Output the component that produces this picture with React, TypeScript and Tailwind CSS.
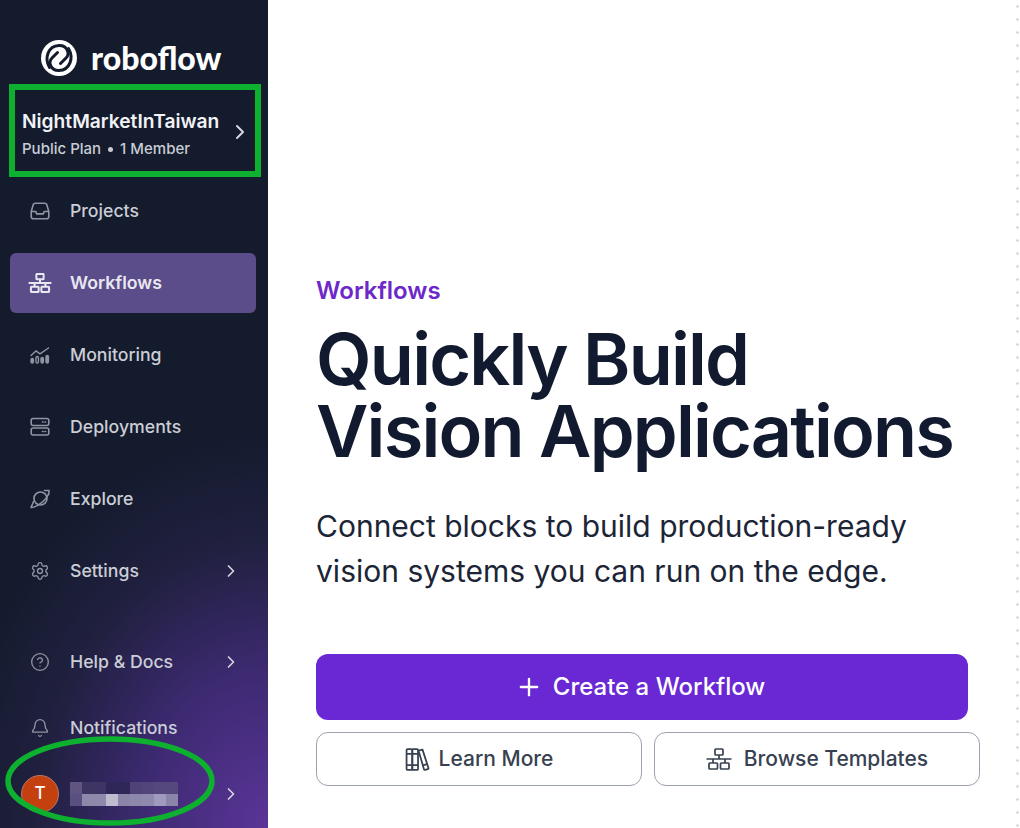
import { Plus, ChevronRight, Settings, Bell, CircleHelp } from "lucide-react";
import type { ReactNode } from "react";

const iconCls = "w-5 h-5 shrink-0 text-[#8f95a3]";

function InboxIcon() {
  return (
    <svg viewBox="0 0 20 20" fill="none" stroke="currentColor" strokeWidth="1.6" className={iconCls}>
      <path d="M1.2 10.500 3.200 3.800A2.200 2.200 0 0 1 5.300 2.200h9.400a2.200 2.200 0 0 1 2.100 1.600l2 6.700v5a2.300 2.300 0 0 1-2.300 2.300H3.500a2.300 2.300 0 0 1-2.300-2.300z" />
      <path d="M1.500 10.500h4.200l1 2.400h6.600l1-2.400h4.200" />
    </svg>
  );
}

function MonitorIcon() {
  return (
    <svg viewBox="0 0 20 20" fill="none" stroke="currentColor" strokeWidth="1.4" strokeLinecap="round" className={iconCls}>
      <path d="M1 10.500 6 6l4 2.800L18.500 3" />
      <rect x="1" y="13.500" width="2.400" height="4.500" rx="1.200" fill="currentColor" />
      <rect x="6" y="11.500" width="2.400" height="6.500" rx="1.200" />
      <rect x="11" y="12.500" width="2.400" height="5.500" rx="1.200" fill="currentColor" />
      <rect x="16" y="10.500" width="2.400" height="7.500" rx="1.200" fill="currentColor" />
    </svg>
  );
}

function ServerIcon() {
  return (
    <svg viewBox="0 0 20 20" fill="none" stroke="currentColor" strokeWidth="1.6" strokeLinecap="round" className={iconCls}>
      <rect x="1.200" y="1.500" width="17.600" height="7" rx="2" />
      <rect x="1.200" y="11" width="17.600" height="7" rx="2" />
      <path d="M12.500 5h.6M15 5h.6M12.500 14.500h.6M15 14.500h.6" />
    </svg>
  );
}

function PlanetIcon() {
  return (
    <svg viewBox="0 0 20 20" fill="none" stroke="currentColor" strokeWidth="1.6" strokeLinecap="round" strokeLinejoin="round" className={iconCls}>
      <circle cx="10.500" cy="9.500" r="6.500" />
      <path d="M14.500 1.500h4.500l-.3 4M3.600 12.500 1 18.500c2.500.4 8.500-2.500 12.500-6.500 3-3 5-6 5.200-8" />
    </svg>
  );
}

function BooksIcon() {
  return (
    <svg viewBox="0 0 24 24" fill="none" stroke="currentColor" strokeWidth="1.700" strokeLinejoin="round" className="h-[25px] w-[25px] text-[#374151]">
      <rect x="1.500" y="2" width="5.500" height="20" rx="1" />
      <rect x="7" y="2" width="5.500" height="20" rx="1" />
      <path d="M13 3.500l3.800-1 5.700 17.600a1 1 0 0 1-.7 1.200l-2.400.7a1 1 0 0 1-1.200-.7z" />
      <path d="M1.500 6.500h11M1.500 17.500h11M16.500 17.800l4.500-1.400" />
    </svg>
  );
}

// top box wired down to two boxes, same drawing in the nav and the button
function BlocksIcon({ className, strokeWidth }: { className: string; strokeWidth: number }) {
  return (
    <svg viewBox="0 0 26 22" fill="none" stroke="currentColor" strokeWidth={strokeWidth} strokeLinejoin="round" className={className}>
      <rect x="9" y="1" width="8" height="6" rx="0.800" />
      <rect x="3" y="15" width="8.500" height="6" rx="0.800" />
      <rect x="14.500" y="15" width="8.500" height="6" rx="0.800" />
      <path d="M13 7v4M0.500 11h25M7 11v4M19 11v4" />
    </svg>
  );
}

function Logo() {
  return (
    <svg viewBox="0 0 36 36" className="h-9 w-9 shrink-0" fill="none" stroke="#141b2d" strokeWidth="3" strokeLinecap="round">
      <circle cx="18" cy="18" r="18" fill="#fff" stroke="none" />
      <path d="M8.500 27.500C3 18 7 6 18 5.500c8-.3 11.500 8 7 12.500l-5.500 5.500" />
      <path d="M27.500 8.500C33 18 29 30 18 30.500c-8 .3-11.500-8-7-12.500l5.500-5.500" />
    </svg>
  );
}

function NavItem({ icon, label, active, chevron }: { icon: ReactNode; label: string; active?: boolean; chevron?: boolean }) {
  return (
    <div
      className={`ml-[10px] mr-[12px] flex h-[60px] items-center rounded-md pr-[15px] pl-5 ${
        active ? "bg-[#5a4d89] font-semibold text-[#e9e7f2]" : "font-medium text-[#cbced6]"
      }`}
    >
      <span className="flex w-10 items-center">{icon}</span>
      <span className="flex-1 text-[17.7px]">{label}</span>
      {chevron && <ChevronRight className="h-5 w-5 text-[#d5d7de]" />}
    </div>
  );
}

const blurRows = [
  ["#5f5580", "#3e3565", "#3e3565", "#2f2758", "#2f2758", "#4e4276", "#514579", "#54487f", "#54487c"],
  ["#5a5080", "#8e88aa", "#8f89ab", "#c0bcd0", "#8a84a8", "#8d87ab", "#8f89ad", "#a09ac0", "#8a84a8"],
];

export default function App() {
  return (
    <div className="flex h-[828px] w-[1020px] overflow-hidden bg-white font-['Inter',sans-serif]">
      <aside className="relative flex h-full w-[268px] shrink-0 flex-col bg-[#141b2d] bg-[radial-gradient(ellipse_320px_400px_at_100%_100%,#5a3598_0%,#3e2a73_38%,#20203f_72%,#141b2d_100%)]">
        <div className="flex h-[84px] items-start pt-[40px] pl-[41px]">
          <Logo />
          <span className="ml-[14px] font-['Lato',sans-serif] text-[32px] leading-9 font-black text-white">roboflow</span>
        </div>
        <div className="mr-[7px] ml-[9px] flex h-[93px] items-center border-[6px] border-[#0eb02f] pr-[3px] pl-[7px]">
          <div className="mt-[7px] flex-1">
            <div className="text-[19.2px] leading-6 font-semibold text-[#f1f2f5]">NightMarketInTaiwan</div>
            <div className="mt-[6px] flex items-center text-[15px] leading-5 font-medium text-[#c9ccd4]">
              Public Plan
              <span className="mx-[7px] h-[5px] w-[5px] rounded-full bg-[#c9ccd4]" />1 Member
            </div>
          </div>
          <ChevronRight className="mt-0.5 h-6 w-6 text-[#d5d7de]" />
        </div>
        <div className="mt-[4px] flex flex-col gap-3">
          <NavItem icon={<InboxIcon />} label="Projects" />
          <NavItem icon={<BlocksIcon className="-ml-[2px] h-[20px] w-[24px] text-[#e9e7f2]" strokeWidth={2.2} />} label="Workflows" active />
          <NavItem icon={<MonitorIcon />} label="Monitoring" />
          <NavItem icon={<ServerIcon />} label="Deployments" />
          <NavItem icon={<PlanetIcon />} label="Explore" />
          <NavItem icon={<Settings className={iconCls} strokeWidth={1.6} />} label="Settings" chevron />
        </div>
        <div className="mt-[31px] flex flex-col gap-[6px]">
          <NavItem icon={<CircleHelp className={iconCls} strokeWidth={1.6} />} label="Help & Docs" chevron />
          <NavItem icon={<Bell className={iconCls} strokeWidth={1.6} />} label="Notifications" />
        </div>
        <div className="mt-[6px] flex h-[60px] items-center pr-[27px] pl-[21px]">
          <div className="flex h-[38px] w-[38px] items-center justify-center rounded-full border border-[#b8776a] bg-[#c4410f] text-[17px] font-medium text-white">
            T
          </div>
          <div className="ml-[11px] flex-1">
            {blurRows.map((row, i) => (
              <div key={i} className="flex">
                {row.map((c, j) => (
                  <div key={j} className="h-3 w-3" style={{ backgroundColor: c }} />
                ))}
              </div>
            ))}
          </div>
          <ChevronRight className="h-5 w-5 text-[#d5d7de]" />
        </div>
        {/* annotation ellipse drawn over the sidebar */}
        <svg className="absolute bottom-0 left-[4px] h-[92px] w-[212px]" viewBox="0 0 212 92" fill="none">
          <ellipse cx="106" cy="45" rx="102" ry="42" stroke="#0eb02f" strokeWidth="5.500" />
        </svg>
      </aside>

      <main className="flex flex-1 flex-col pt-[275px] pl-[48px] text-[#111a2e]">
        <div className="text-[24px] leading-8 font-semibold text-[#6d28c9]">Workflows</div>
        <h1 className="mt-[16px] text-[72px] leading-[72px] font-semibold tracking-[-1.8px]">
          Quickly Build
          <br />
          Vision Applications
        </h1>
        <p className="mt-[37px] text-[30px] leading-[45px] text-[#1c2536]">
          Connect blocks to build production-ready
          <br />
          vision systems you can run on the edge.
        </p>
        <button className="mt-[60px] flex h-[66px] w-[652px] items-center justify-center gap-[10px] rounded-xl bg-[#6a28d5] pr-1 text-[24px] font-medium text-white">
          <Plus className="h-7 w-7" strokeWidth={2} />
          Create a Workflow
        </button>
        <div className="mt-3 flex w-[664px] gap-3">
          <button className="flex h-[54px] flex-1 items-center justify-center gap-[9px] rounded-xl border border-[#9ca3af] text-[21px] font-medium text-[#374151]">
            <BooksIcon />
            Learn More
          </button>
          <button className="flex h-[54px] flex-1 items-center justify-center gap-3 rounded-xl border border-[#9ca3af] text-[21px] font-medium text-[#374151]">
            <BlocksIcon className="h-[22px] w-[26px]" strokeWidth={1.7} />
            Browse Templates
          </button>
        </div>
      </main>

      <div className="mr-px h-full w-[3px] shrink-0 bg-[radial-gradient(circle,#d9d9de_1.2px,transparent_1.5px)] bg-[length:3px_13px]" />
    </div>
  );
}
